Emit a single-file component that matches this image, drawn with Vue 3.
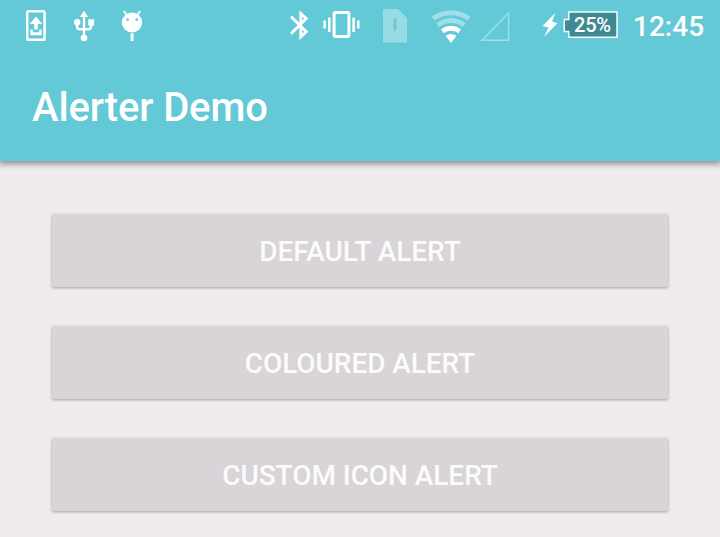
<script setup>
const buttons = ['Default Alert', 'Coloured Alert', 'Custom Icon Alert']
</script>

<template>
  <div class="screen">
    <header class="top">
      <div class="status">
        <div class="left">
          <svg class="icon" width="24" height="50" viewBox="24 0 24 50">
            <rect x="27.2" y="11.2" width="17.4" height="28.6" rx="1.6" fill="none" stroke="#fff" stroke-width="2.5" />
            <path d="M36 16.500l6.300 7.500h-4.500v5.500h-3.600V24h-4.500zM30.300 29.500h2.500v2.700h6.400v-2.700h2.500V35.200h-11.400z" fill="#fff" />
          </svg>
          <svg class="icon" width="24" height="50" viewBox="72 0 24 50">
            <path d="M84 15v22M77 22v4.500q0 2.800 3 2.800h8q3 0 3-2.800V23" fill="none" stroke="#fff" stroke-width="2.400" />
            <path d="M84 10.800l4.200 6.200h-8.400zM88.200 19.300h6v6.200h-6z" fill="#fff" />
            <circle cx="77.200" cy="22.300" r="3.200" fill="#fff" />
            <circle cx="84" cy="38" r="3.300" fill="#fff" />
          </svg>
          <svg class="icon" width="24" height="50" viewBox="120 0 24 50">
            <path d="M123.700 11l4 5M140.300 11l-4 5" stroke="#fff" stroke-width="1.800" />
            <ellipse cx="132" cy="22.500" rx="10.200" ry="10" fill="#fff" />
            <circle cx="127.600" cy="19.600" r="1.400" fill="#64c9d6" />
            <circle cx="136.800" cy="19.600" r="1.400" fill="#64c9d6" />
            <rect x="130.600" y="33.500" width="3" height="7.500" fill="#fff" />
          </svg>
        </div>
        <div class="right">
          <svg class="icon" width="22" height="50" viewBox="289 0 22 50">
            <path d="M291 16.500l15.200 15.300-5.400 5V13.500l5.400 5L291 33.800" fill="none" stroke="#fff" stroke-width="2.900" />
          </svg>
          <svg class="icon vibrate" width="38" height="50" viewBox="323 0 38 50">
            <rect x="334.100" y="12.600" width="14.800" height="24" rx="1.500" fill="none" stroke="#fff" stroke-width="3" />
            <path d="M329.300 17.500v14.500M324.600 20.500v8M353.600 17.500v14.500M358.300 20.500v8" stroke="#fff" stroke-width="2.500" />
          </svg>
          <svg class="icon sim" width="24" height="50" viewBox="383 0 24 50">
            <path d="M384.500 9H398l9 9v24.500h-24V10.500q0-1.500 1.500-1.500z" fill="#97dce5" />
            <path d="M393.500 18.500h3v9.500l-1.500 4-1.500-4z" fill="#74c5d0" />
          </svg>
          <svg class="icon wifi" width="40" height="50" viewBox="431 0 40 50">
            <g fill="none" stroke="#a0dfe7">
              <path d="M433 18.500q18-11.500 36 0" stroke-width="5" />
              <path d="M437.500 25q13.500-9 27 0" stroke-width="4.700" />
            </g>
            <path d="M442.300 31.200q8.700-5.800 17.400 0" fill="none" stroke="#fff" stroke-width="4.800" />
            <path d="M445.500 35.800q5.500-3.800 11 0L451 43z" fill="#fff" />
          </svg>
          <svg class="icon signal" width="30" height="50" viewBox="480 0 30 50">
            <path d="M482 40.300L508.600 13v27.300z" fill="none" stroke="#a0dfe7" stroke-width="1.400" />
          </svg>
          <svg class="icon bolt" width="16" height="50" viewBox="542 0 16 50">
            <path d="M555.200 13L542.500 26l6 1.600L544 36.800l13.500-13.600-5.500-1.700z" fill="#fff" />
          </svg>
          <div class="battery">
            <svg class="shell" width="56" height="28" viewBox="563 11 56 28">
              <path d="M568.800 12H617v25.300h-48.200v-5.800h-4.500V19.500h4.500z" fill="#3f8992" stroke="#f4fcfd" stroke-width="1.500" />
            </svg>
            <span class="percent">25%</span>
          </div>
          <span class="clock">12:45</span>
        </div>
      </div>
      <h1 class="title">Alerter Demo</h1>
    </header>
    <main class="list">
      <button v-for="label in buttons" :key="label" class="btn">{{ label }}</button>
    </main>
  </div>
</template>

<style>
body {
  margin: 0;
  overflow: hidden;
}
</style>

<style scoped>
.screen {
  width: 720px;
  height: 537px;
  overflow: hidden;
  display: flex;
  flex-direction: column;
  background: #efebee;
  font-family: Roboto, sans-serif;
  font-weight: 500;
  color: #fff;
}
.top {
  flex: none;
  height: 161px;
  background: #64c9d6;
  box-shadow: 0 2px 6px 1px rgba(0, 0, 0, 0.4);
}
.status {
  height: 50px;
  display: flex;
  justify-content: space-between;
  padding: 0 16px 0 24px;
}
.left {
  display: flex;
  gap: 24px;
}
.right {
  display: flex;
}
.icon {
  display: block;
  flex: none;
}
.vibrate {
  margin-left: 12px;
}
.sim {
  margin-left: 22px;
}
.wifi {
  margin-left: 24px;
}
.signal {
  margin-left: 9px;
}
.bolt {
  margin-left: 32px;
}
.battery {
  display: grid;
  width: 56px;
  height: 28px;
  margin: 11px 0 0 5px;
}
.shell,
.percent {
  grid-area: 1 / 1;
}
.percent {
  padding-left: 11px;
  font-size: 20px;
  line-height: 28px;
  letter-spacing: -0.2px;
}
.clock {
  width: 71px;
  margin-left: 14px;
  font-size: 28px;
  line-height: 53px;
  white-space: nowrap;
}
.title {
  margin: 0;
  padding-left: 32px;
  font-size: 40px;
  font-weight: 500;
  line-height: 115px;
  letter-spacing: -0.12px;
}
.list {
  display: flex;
  flex-direction: column;
  gap: 39px;
  padding: 53px 52px 0;
}
.btn {
  flex: none;
  height: 73px;
  padding: 1px 0 0;
  border: 0;
  border-radius: 2px;
  background: #d8d4d7;
  box-shadow: 0 1px 3px rgba(0, 0, 0, 0.32);
  color: #fcfbfc;
  font-family: inherit;
  font-size: 28px;
  font-weight: 500;
  letter-spacing: -0.06px;
  text-transform: uppercase;
}
</style>
